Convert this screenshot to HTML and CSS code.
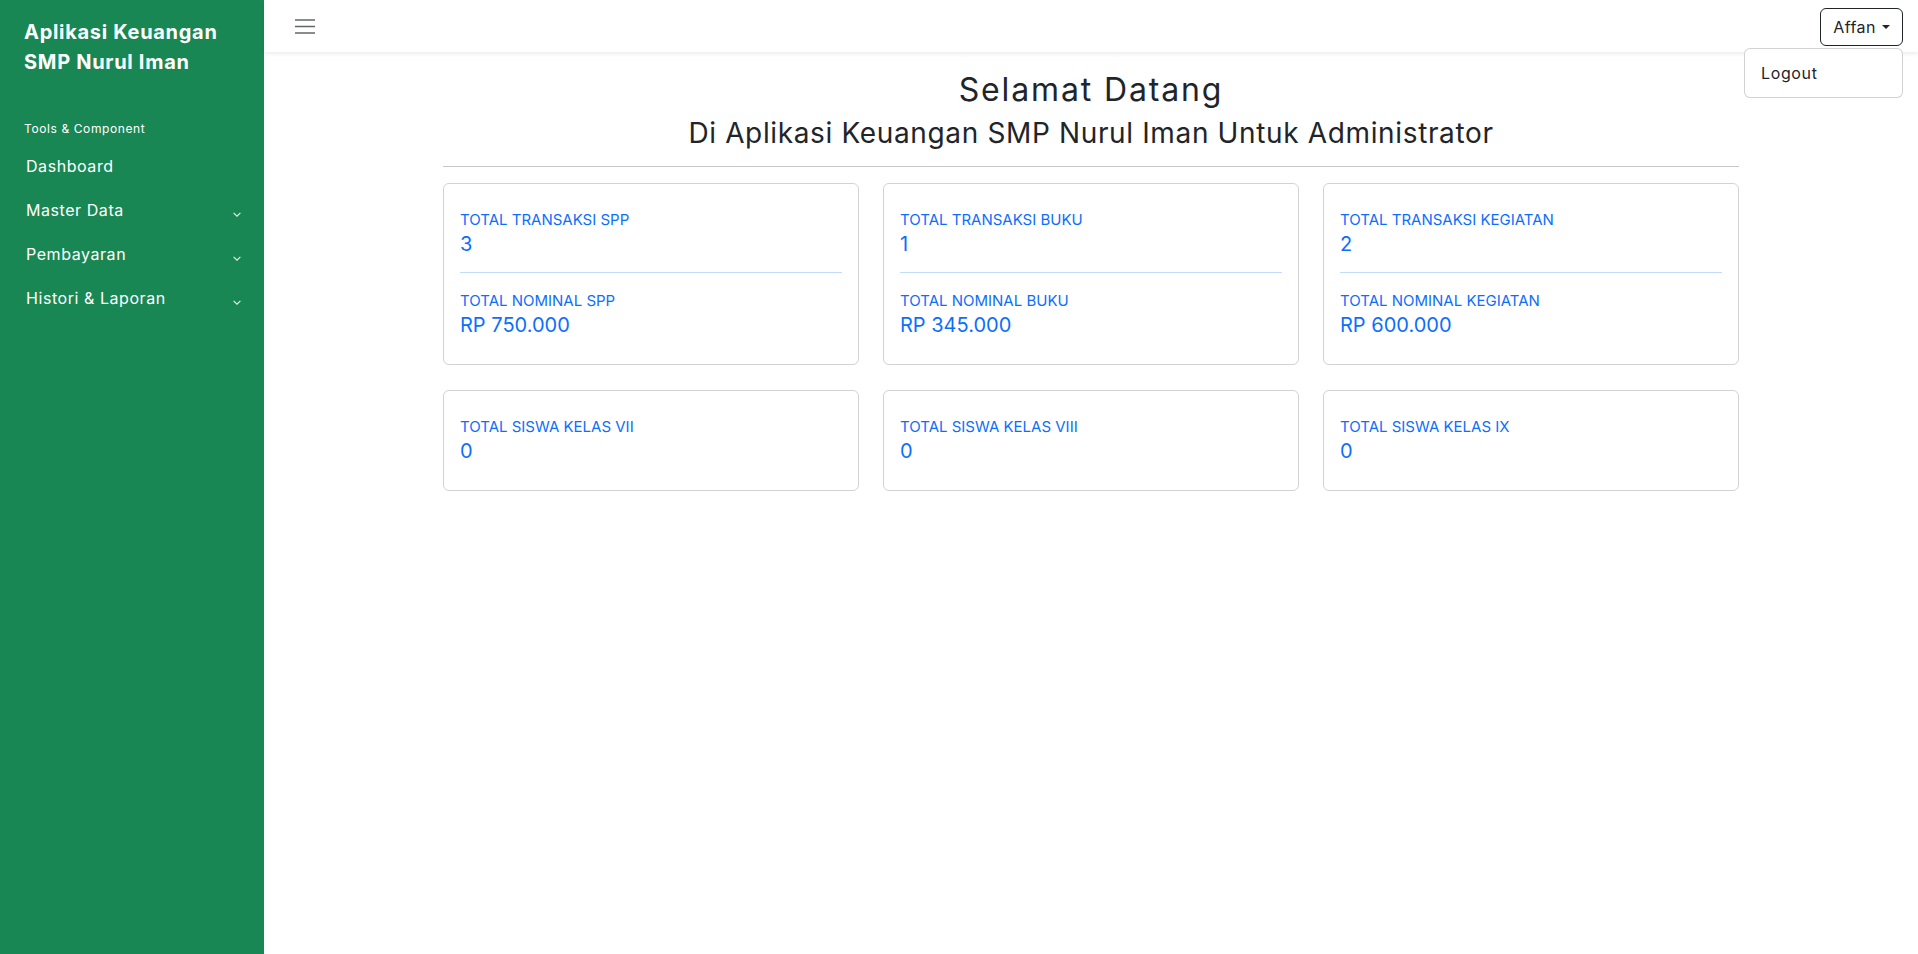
FILE: index.html
```html
<!DOCTYPE html>
<html lang="id">
<head>
<meta charset="utf-8">
<title>Aplikasi Keuangan SMP Nurul Iman</title>
<link rel="stylesheet" href="styles.css">
</head>
<body>
<div class="app">
  <aside class="sidebar">
    <div class="brand">Aplikasi Keuangan<br>SMP Nurul Iman</div>
    <div class="nav-heading">Tools &amp; Component</div>
    <nav class="nav">
      <a class="nav-link" href="#">Dashboard</a>
      <a class="nav-link" href="#">Master Data<svg class="chev" viewBox="0 0 8 5" width="8" height="5"><polyline points="0.6,0.8 4,4.2 7.4,0.8"/></svg></a>
      <a class="nav-link" href="#">Pembayaran<svg class="chev" viewBox="0 0 8 5" width="8" height="5"><polyline points="0.6,0.8 4,4.2 7.4,0.8"/></svg></a>
      <a class="nav-link" href="#">Histori &amp; Laporan<svg class="chev" viewBox="0 0 8 5" width="8" height="5"><polyline points="0.6,0.8 4,4.2 7.4,0.8"/></svg></a>
    </nav>
  </aside>
  <main class="main">
    <header class="topbar">
      <button class="toggler" type="button" aria-label="Toggle">
        <svg viewBox="0 0 20 16" width="20" height="16"><path d="M0 2h20M0 8.5h20M0 15h20"/></svg>
      </button>
      <div class="user">
        <button class="user-btn" type="button">Affan<span class="caret"></span></button>
        <div class="dropdown"><a class="dropdown-item" href="#">Logout</a></div>
      </div>
    </header>
    <section class="content">
      <div class="container">
        <h2 class="title">Selamat Datang</h2>
        <h3 class="subtitle">Di Aplikasi Keuangan SMP Nurul Iman Untuk Administrator</h3>
        <hr class="divider">
        <div class="card-row">
          <div class="card">
            <div class="label">TOTAL TRANSAKSI SPP</div>
            <div class="value">3</div>
            <hr class="card-hr">
            <div class="label">TOTAL NOMINAL SPP</div>
            <div class="value">RP 750.000</div>
          </div>
          <div class="card">
            <div class="label">TOTAL TRANSAKSI BUKU</div>
            <div class="value">1</div>
            <hr class="card-hr">
            <div class="label">TOTAL NOMINAL BUKU</div>
            <div class="value">RP 345.000</div>
          </div>
          <div class="card">
            <div class="label">TOTAL TRANSAKSI KEGIATAN</div>
            <div class="value">2</div>
            <hr class="card-hr">
            <div class="label">TOTAL NOMINAL KEGIATAN</div>
            <div class="value">RP 600.000</div>
          </div>
        </div>
        <div class="card-row second">
          <div class="card">
            <div class="label">TOTAL SISWA KELAS VII</div>
            <div class="value">0</div>
          </div>
          <div class="card">
            <div class="label">TOTAL SISWA KELAS VIII</div>
            <div class="value">0</div>
          </div>
          <div class="card">
            <div class="label">TOTAL SISWA KELAS IX</div>
            <div class="value">0</div>
          </div>
        </div>
      </div>
    </section>
  </main>
</div>
</body>
</html>
```
FILE: styles.css
```css
* { box-sizing: border-box; }

html, body { height: 100%; }

body {
  margin: 0;
  font-family: Inter, "Liberation Sans", sans-serif;
  color: #212529;
  background: #fff;
  letter-spacing: 0.04em;
}

.app {
  display: flex;
  min-height: 100vh;
}

/* Sidebar */
.sidebar {
  width: 264px;
  flex: 0 0 264px;
  background: #198754;
  color: #fff;
}

.brand {
  padding: 17px 24px 0;
  font-size: 20px;
  font-weight: 700;
  line-height: 30px;
  letter-spacing: 0.035em;
}

.nav-heading {
  margin-top: 43px;
  padding-left: 24px;
  font-size: 12px;
  line-height: 18px;
  letter-spacing: 0.05em;
}

.nav {
  display: flex;
  flex-direction: column;
  margin-top: 6px;
}

.nav-link {
  display: flex;
  align-items: center;
  justify-content: space-between;
  padding: 10px 23px 10px 26px;
  font-size: 16px;
  line-height: 24px;
  color: #fff;
  letter-spacing: 0.035em;
  text-decoration: none;
}

.chev {
  margin-top: 8px;
  fill: none;
  stroke: #fff;
  stroke-width: 1.2;
  opacity: 0.85;
}

/* Main */
.main {
  flex: 1;
  display: flex;
  flex-direction: column;
  min-width: 0;
}

.topbar {
  height: 52px;
  display: flex;
  align-items: flex-start;
  justify-content: space-between;
  padding: 0 15px 0 31px;
  background: #fff;
  box-shadow: 0 2px 4px rgba(0, 0, 0, 0.075);
  position: relative;
  z-index: 2;
}

.toggler {
  margin-top: 18px;
  padding: 0;
  border: 0;
  background: transparent;
  line-height: 0;
}

.toggler svg {
  stroke: rgba(33, 37, 41, 0.7);
  stroke-width: 1.7;
  fill: none;
}

.user {
  position: relative;
  margin-top: 8px;
}

.user-btn {
  display: flex;
  align-items: center;
  height: 38px;
  padding: 6px 12px;
  border: 1px solid #212529;
  border-radius: 6px;
  background: #fff;
  font-family: inherit;
  font-size: 16px;
  line-height: 24px;
  color: #212529;
  letter-spacing: 0.03em;
}

.caret {
  display: inline-block;
  margin-left: 6px;
  border-top: 4px solid #212529;
  border-left: 4px solid transparent;
  border-right: 4px solid transparent;
}

.dropdown {
  position: absolute;
  top: calc(100% + 2px);
  right: 0;
  width: 159px;
  padding: 8px 0;
  background: #fff;
  border: 1px solid rgba(0, 0, 0, 0.175);
  border-radius: 6px;
}

.dropdown-item {
  display: block;
  padding: 4px 16px;
  font-size: 16px;
  line-height: 24px;
  color: #212529;
  text-decoration: none;
}

/* Content */
.content {
  padding-top: 19px;
}

.container {
  max-width: 1320px;
  margin: 0 auto;
  padding: 0 12px;
}

.title {
  margin: 0 0 8px;
  font-size: 32px;
  line-height: 1.2;
  font-weight: 400;
  letter-spacing: 0.058em;
  text-align: center;
}

.subtitle {
  margin: 0;
  font-size: 28px;
  line-height: 1.2;
  font-weight: 400;
  text-align: center;
}

.divider {
  margin: 15px 0 16px;
  border: 0;
  border-top: 1px solid rgba(33, 37, 41, 0.25);
}

.card-row {
  display: flex;
  gap: 24px;
}

.card-row.second {
  margin-top: 25px;
}

.card {
  flex: 1 1 0;
  min-width: 0;
  padding: 24px 16px 27px;
  border: 1px solid rgba(0, 0, 0, 0.175);
  border-radius: 6px;
  color: #0d6efd;
}

.label {
  font-size: 15px;
  line-height: 24px;
  letter-spacing: 0;
}

.value {
  font-size: 20px;
  line-height: 24px;
  letter-spacing: 0;
}

.card-hr {
  margin: 16px 0;
  border: 0;
  border-top: 1px solid rgba(13, 110, 253, 0.25);
}
```
